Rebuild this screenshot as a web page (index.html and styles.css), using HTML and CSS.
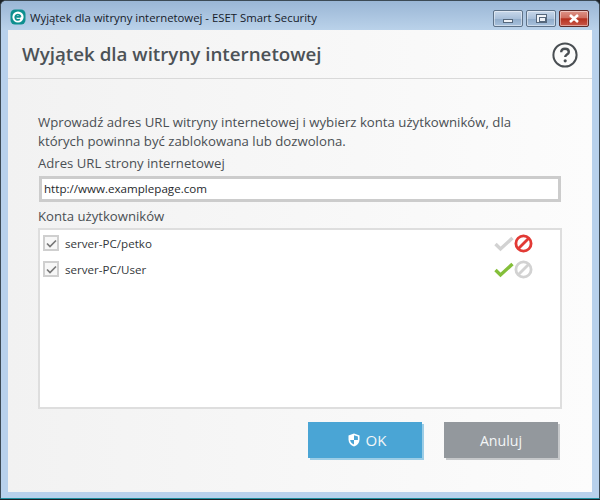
FILE: index.html
```html
<!DOCTYPE html>
<html lang="pl">
<head>
<meta charset="utf-8">
<title>Wyjątek dla witryny internetowej</title>
<link rel="stylesheet" href="styles.css">
</head>
<body>
<div class="window">
  <div class="titlebar">
    <svg class="app-icon" width="16" height="16" viewBox="0 0 16 16"><rect x="0.5" y="0.5" width="15" height="15" rx="4.5" fill="#0d8f8f"/><circle cx="8" cy="8" r="5.6" fill="#fff"/><path d="M5.4 7.900h5.200M10.600 7.900a2.700 2.700 0 1 0-.8 2.300" fill="none" stroke="#0d8f8f" stroke-width="1.7"/></svg>
    <span class="title-text">Wyjątek dla witryny internetowej - ESET Smart Security</span>
    <div class="controls">
      <div class="ctl"><span class="min-glyph"></span></div>
      <div class="ctl"><span class="max-glyph"></span></div>
      <div class="ctl close"><svg width="12" height="9" viewBox="0 0 12 9"><path d="M2 1l8 7M10 1l-8 7" stroke="#fff" stroke-width="2.6" fill="none"/></svg></div>
    </div>
  </div>
  <div class="client">
    <header class="head">
      <h1 class="heading">Wyjątek dla witryny internetowej</h1>
      <svg class="help" width="26" height="26" viewBox="0 0 26 26"><circle cx="13" cy="13" r="11.600" fill="none" stroke="#4a4f53" stroke-width="2"/><path d="M9.200 10.200c0-2.300 1.700-3.500 3.800-3.500s3.800 1.200 3.800 3.200c0 2.600-3.600 2.700-3.600 5.100" fill="none" stroke="#4a4f53" stroke-width="2.400"/><circle cx="13.200" cy="18.800" r="1.600" fill="#4a4f53"/></svg>
    </header>
    <main class="content">
      <p class="intro">Wprowadź adres URL witryny internetowej i wybierz konta użytkowników, dla których powinna być zablokowana lub dozwolona.</p>
      <label class="field-label">Adres URL strony internetowej</label>
      <div class="url-input">http://www.examplepage.com</div>
      <label class="field-label accounts-label">Konta użytkowników</label>
      <div class="list">
        <div class="row">
          <span class="check"><svg width="11" height="9" viewBox="0 0 11 9"><path d="M1 4.500l3 3 6-6" fill="none" stroke="#777" stroke-width="1.700"/></svg></span>
          <span class="user">server-PC/petko</span>
          <span class="states">
            <svg width="20" height="17" viewBox="0 0 20 17"><path d="M1.500 9l5 5L18.500 3" fill="none" stroke="#d2d2d2" stroke-width="3.400"/></svg>
            <svg width="19" height="19" viewBox="0 0 19 19"><circle cx="9.500" cy="9.500" r="7.600" fill="none" stroke="#e23a35" stroke-width="2.800"/><path d="M4.500 14.500l10-10" stroke="#e23a35" stroke-width="2.800"/></svg>
          </span>
        </div>
        <div class="row">
          <span class="check"><svg width="11" height="9" viewBox="0 0 11 9"><path d="M1 4.500l3 3 6-6" fill="none" stroke="#777" stroke-width="1.700"/></svg></span>
          <span class="user">server-PC/User</span>
          <span class="states">
            <svg width="20" height="17" viewBox="0 0 20 17"><path d="M1.500 9l5 5L18.500 3" fill="none" stroke="#84bf3a" stroke-width="3.400"/></svg>
            <svg width="19" height="19" viewBox="0 0 19 19"><circle cx="9.500" cy="9.500" r="7.600" fill="none" stroke="#d2d2d2" stroke-width="2.800"/><path d="M4.500 14.500l10-10" stroke="#d2d2d2" stroke-width="2.800"/></svg>
          </span>
        </div>
      </div>
    </main>
    <footer class="actions">
      <div class="btn ok"><svg width="12" height="14" viewBox="0 0 12 14"><path d="M6 .5l5.500 2v4.200c0 3.200-2.400 5.600-5.500 6.800C2.900 12.300.5 9.900.5 6.700V2.500z" fill="#fff"/><path d="M6 2.200v4.800h3.900V3.500zM6 7H2.100c.3 2 1.800 3.600 3.900 4.600z" fill="#4aa5d5"/></svg>OK</div>
      <div class="btn cancel">Anuluj</div>
    </footer>
  </div>
</div>
</body>
</html>
```
FILE: styles.css
```css
* { box-sizing: border-box; }
html, body { margin: 0; padding: 0; background: #1c2126; }
body { width: 600px; height: 500px; overflow: hidden; font-family: "Open Sans", "Noto Sans", sans-serif; }
.window {
  width: 600px; height: 499px;
  border-radius: 6px 6px 0 0;
  border: 1px solid #3c4a55; border-bottom-color: #1f8f9f;
  background: #b8d1ec;
  padding-bottom: 6px;
  display: flex; flex-direction: column;
}
.titlebar {
  height: 29px; flex: none;
  background: linear-gradient(#9ab6d5, #bad2ea);
  border-radius: 5px 5px 0 0;
  display: flex; align-items: center;
  padding: 0 10px 0 9px;
}
.app-icon { margin-top: 3px; flex: none; }
.title-text { margin-left: 4px; margin-top: 3px; font-size: 11.35px; color: #16202a; white-space: nowrap; }
.controls { margin-left: auto; display: flex; gap: 3px; align-self: flex-start; margin-top: 9px; }
.ctl {
  width: 30px; height: 17px; border: 1px solid #5d7187; border-radius: 2px;
  background: linear-gradient(#c8d8ea 0, #a9c0da 50%, #8fabc9 51%, #a8c1dc 100%);
  box-shadow: inset 0 0 0 1px rgba(255,255,255,.45);
  display: flex; align-items: center; justify-content: center;
}
.min-glyph { width: 10px; height: 4px; margin-top: 5px; background: #eef2f7; border: 1px solid #55677b; }
.max-glyph { width: 11px; height: 9px; background: #eef2f7; border: 1px solid #55677b; position: relative; }
.max-glyph::after { content: ""; position: absolute; left: 2px; top: 2px; width: 5px; height: 3px; border: 1px solid #55677b; }
.ctl.close { background: linear-gradient(#dd9488 0, #cf6f60 45%, #b5301e 52%, #c9584a 100%); border-color: #5d2a28; }
.client {
  margin: 0 7px; flex: 1; min-height: 0;
  background: linear-gradient(90deg, #f2f2f2, #fcfcfc);
  display: flex; flex-direction: column;
}
.head {
  height: 49px; flex: none;
  border-bottom: 1px solid #d9d9d9;
  display: flex; align-items: center; justify-content: space-between;
  padding: 0 14px 2px 14px;
}
.heading { margin: 0; font-size: 18.75px; font-weight: 600; color: #4c5257; white-space: nowrap; }
.help { margin-top: 3px; }
.content { flex: 1; min-height: 0; padding: 34px 30px 0 30px; display: flex; flex-direction: column; }
.intro { margin: 0; font-size: 13.2px; line-height: 19px; color: #4a4f53; width: 500px; }
.field-label { display: block; font-size: 13.15px; line-height: 18px; color: #4a4f53; margin-top: 3px; }
.url-input {
  margin: 4px 0 0 1px; width: 522px; height: 26px;
  border: 3px solid #cccccc; background: #fff;
  padding-left: 2px; font-size: 11.6px; line-height: 19px; color: #26292c;
}
.accounts-label { margin-top: 5px; }
.list { margin-top: 3px; width: 524px; height: 181px; flex: none; border: 2px solid #dedede; background: #fff; }
.row { height: 26px; display: flex; align-items: center; padding-left: 3px; }
.check { width: 16px; height: 16px; border: 2px solid #cfcfcf; background: #f7f7f7; display: flex; align-items: center; justify-content: center; flex: none; }
.user { margin-left: 6px; font-size: 11.6px; color: #33373a; }
.states { margin-left: auto; margin-right: 27px; display: flex; align-items: center; gap: 0; }
.actions { height: 83px; flex: none; display: flex; gap: 22px; padding: 13px 0 0 300px; }
.btn {
  width: 114px; height: 36px;
  display: flex; align-items: center; justify-content: center; gap: 6px;
  font-size: 14.2px; color: #f4f6f7;
}
.ok { background: #4aa5d5; box-shadow: 2px 2px 0 #9ccde6; font-size: 15px; padding-left: 4px; }
.cancel { background: #93989d; box-shadow: 2px 2px 0 #c6c8ca; }
```
